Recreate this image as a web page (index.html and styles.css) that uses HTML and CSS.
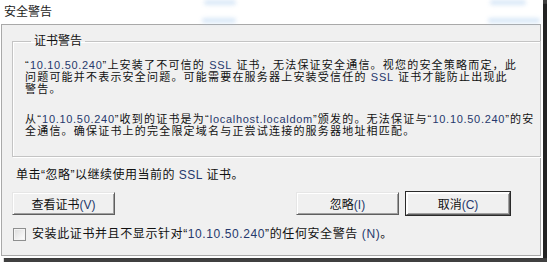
FILE: index.html
```html
<!DOCTYPE html>
<html lang="zh-CN">
  <head>
    <meta charset="UTF-8" />
    <meta name="viewport" content="width=device-width, initial-scale=1.0" />
    <title>安全警告</title>
    <link rel="stylesheet" href="styles.css">
  </head>
  <body>
    <div class="window">
      <div class="titlebar">
        <span class="blur blur-a"></span>
        <span class="blur blur-b"></span>
        <span class="blur blur-c"></span>
        <span class="blur blur-d"></span>
        <span class="title">安全警告</span>
      </div>

      <div class="panel">
        <fieldset class="group">
          <legend>证书警告</legend>
          <p>“<span class="lat">10.10.50.240</span>”上安装了不可信的 <span class="lat">SSL</span> 证书，无法保证安全通信。视您的安全策略而定，此<br>问题可能并不表示安全问题。可能需要在服务器上安装受信任的 <span class="lat">SSL</span> 证书才能防止出现此<br>警告。</p>
          <p>从“<span class="lat">10.10.50.240</span>”收到的证书是为“<span class="lat">localhost.localdom</span>”颁发的。无法保证与“<span class="lat">10.10.50.240</span>”的安<br>全通信。确保证书上的完全限定域名与正尝试连接的服务器地址相匹配。</p>
        </fieldset>

        <p class="hint">单击“忽略”以继续使用当前的 <span class="lat">SSL</span> 证书。</p>

        <div class="buttons">
          <button class="btn">查看证书<span class="lat">(V)</span></button>
          <div class="btn-group">
            <button class="btn">忽略<span class="lat">(I)</span></button>
            <button class="btn btn-default">取消<span class="lat">(C)</span></button>
          </div>
        </div>

        <label class="check">
          <input type="checkbox" />
          <span>安装此证书并且不显示针对“<span class="lat">10.10.50.240</span>”的任何安全警告 <span class="lat">(N)</span>。</span>
        </label>
      </div>
    </div>
  </body>
</html>
```

FILE: styles.css
```css
html,
body {
  margin: 0;
  padding: 0;
  background: #ffffff;
}
body {
  width: 547px;
  height: 262px;
  overflow: hidden;
  font-family: "Liberation Sans", "Noto Sans CJK SC", sans-serif;
  font-size: 12px;
  color: #111111;
}
.window {
  width: 543px;
  height: 258px;
  background: #ffffff;
  box-shadow: 4px 4px 1px rgba(30, 30, 30, 0.85), 4px 0 1px rgba(30, 30, 30, 0.85);
  display: flex;
  flex-direction: column;
}
.titlebar {
  position: relative;
  height: 24px;
  flex: none;
}
.title {
  position: relative;
  display: block;
  padding: 4px 0 0 4px;
  line-height: 16px;
  color: #1a1a1a;
}
.blur {
  position: absolute;
  height: 5px;
  background: #a9cbee;
  border-radius: 3px;
  filter: blur(2px);
  opacity: 0.45;
}
.blur-a { left: 204px; top: 0; width: 32px; }
.blur-b { left: 202px; top: 18px; width: 34px; }
.blur-c { left: 490px; top: 0; width: 36px; }
.blur-d { left: 488px; top: 18px; width: 52px; }

.panel {
  margin: 0 2px 2px 1px;
  flex: 1;
  background: #f0f0f0;
  border: 1px solid #a9a9a9;
  display: flex;
  flex-direction: column;
}
.lat {
  color: #26386c;
}
.group {
  margin: 9px 9px 0 10px;
  padding: 11px 6px 0 12px;
  height: 123px;
  border: 1px solid #c4c4c4;
  box-shadow: inset 1px 1px 0 #ffffff, 1px 1px 0 #ffffff;
  box-sizing: border-box;
}
.group legend {
  padding: 0 3px;
  margin-left: 6px;
  line-height: 14px;
}
.group p {
  margin: 0 0 18px;
  font-size: 11px;
  line-height: 12px;
  letter-spacing: 1.2px;
  white-space: nowrap;
}
.group p .lat {
  letter-spacing: 0.7px;
}
.hint {
  margin: 11px 0 0 14px;
  line-height: 14px;
  letter-spacing: 0.5px;
}
.buttons {
  display: flex;
  justify-content: space-between;
  margin: 10px 30px 0 10px;
}
.btn-group {
  display: flex;
  gap: 7px;
}
.btn {
  width: 103px;
  height: 23px;
  padding: 0;
  font: inherit;
  color: #111111;
  background: #f0f0f0;
  border: 1px solid;
  border-color: #e6e6e6 #5f5f5f #5f5f5f #e6e6e6;
  box-shadow: inset 1px 1px 0 #ffffff, inset -1px -1px 0 #a0a0a0;
}
.btn-default {
  width: 104px;
  outline: 1px solid #2a2a2a;
  border-color: #ffffff #5f5f5f #5f5f5f #ffffff;
}
.check {
  display: flex;
  align-items: center;
  gap: 6px;
  margin: 12px 0 0 11px;
  line-height: 14px;
  letter-spacing: 0.6px;
}
.check input {
  appearance: none;
  width: 13px;
  height: 13px;
  margin: 0;
  border: 1px solid #8e8f8f;
  background: linear-gradient(135deg, #dcdcdc, #ffffff);
  box-shadow: inset 0 0 0 1px #f4f4f4;
}
```
